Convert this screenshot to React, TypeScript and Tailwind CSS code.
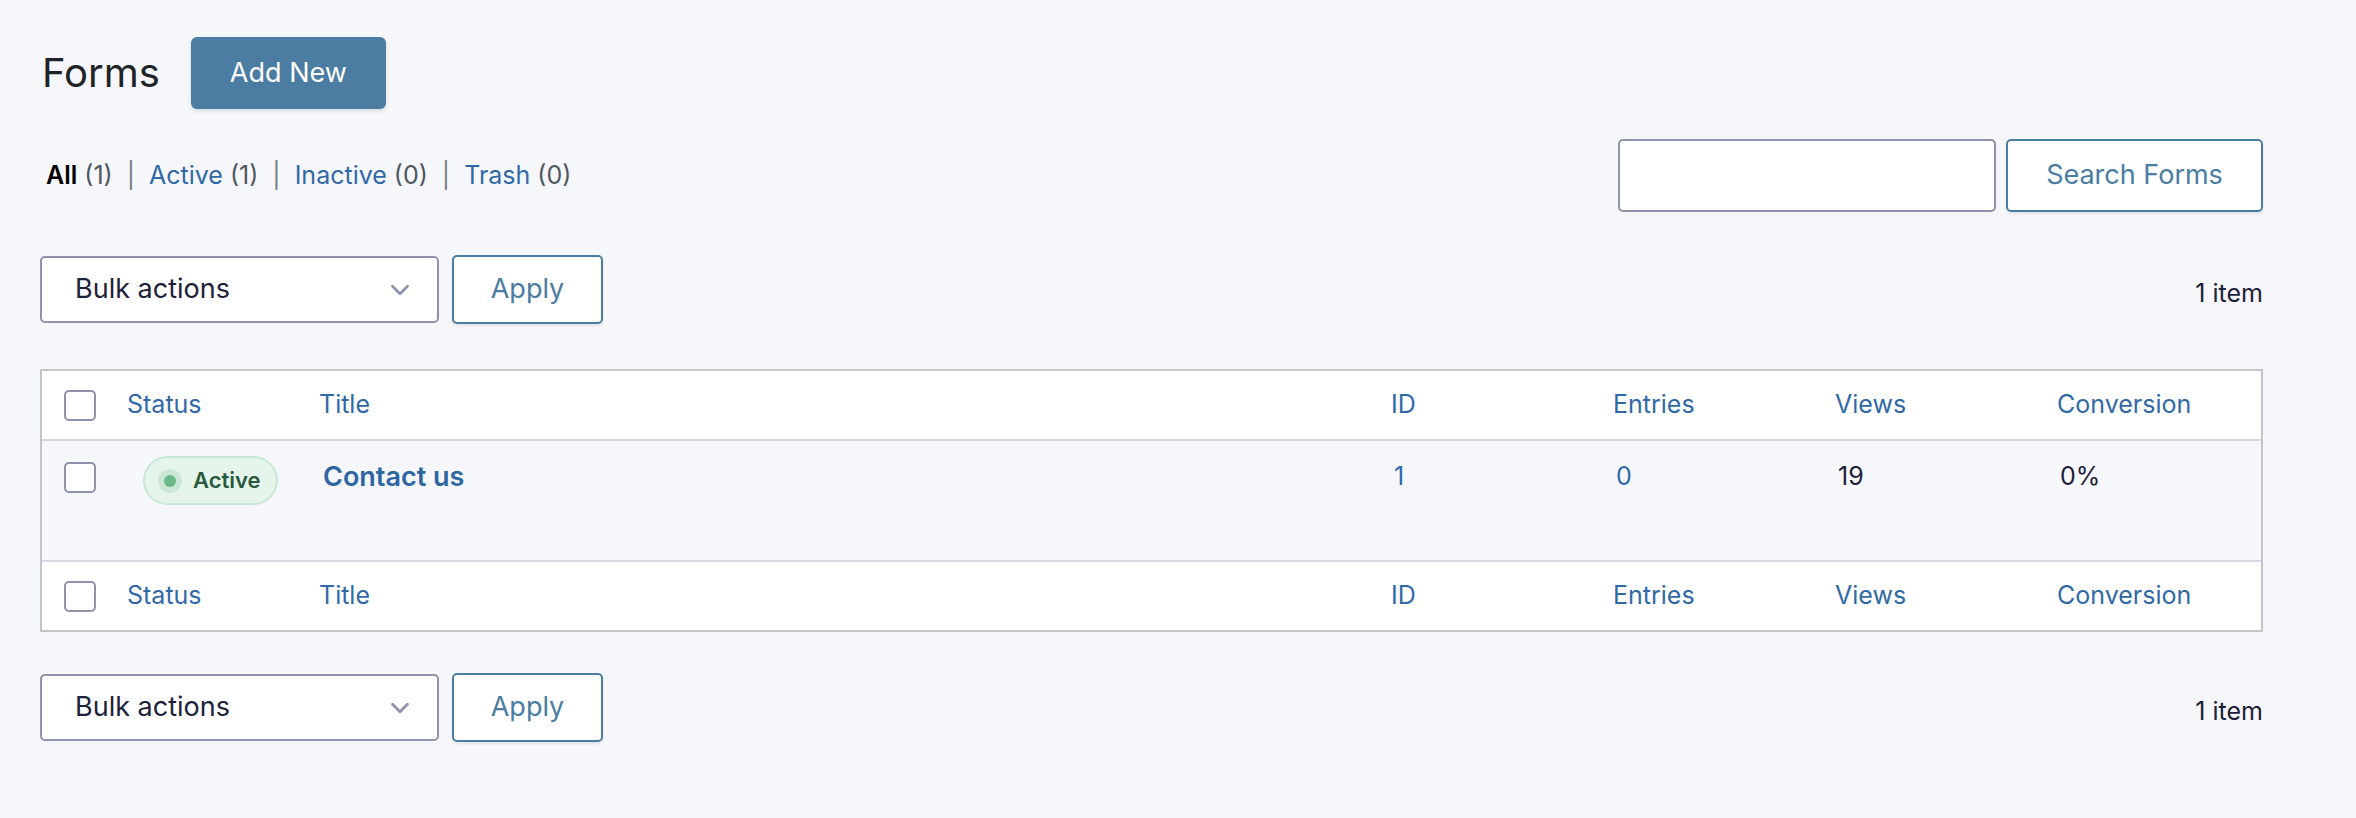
import { ChevronDown } from 'lucide-react';

const COLS = 'grid grid-cols-[85px_192px_1072px_222px_222px_222px_1fr]';

function Checkbox() {
  return <span className="block h-[31px] w-[32px] rounded-[5px] border-2 border-[#8f91ad] bg-white" />;
}

function HeaderRow() {
  return (
    <div className={`${COLS} h-[68px] items-center bg-white text-[25px] text-[#3169a6]`}>
      <div className="pl-[22px]">
        <Checkbox />
      </div>
      <span>Status</span>
      <span>Title</span>
      <span>ID</span>
      <span>Entries</span>
      <span>Views</span>
      <span>Conversion</span>
    </div>
  );
}

function BulkBar() {
  return (
    <div className="flex items-center justify-between">
      <div className="flex items-center gap-[13px]">
        <div className="flex h-[67px] w-[399px] items-center justify-between rounded-[5px] border-2 border-[#8f91ad] bg-white pl-[33px] pr-[22px] text-[27px] text-[#1d2139]">
          <span>Bulk actions</span>
          <ChevronDown className="h-[30px] w-[30px] text-[#8f91ad]" strokeWidth={2.2} />
        </div>
        <button
          type="button"
          className="h-[69px] w-[151px] rounded-[5px] border-2 border-[#4b7ca2] bg-white text-[27px] text-[#4b7ca2] shadow-[0_2px_3px_rgba(0,0,0,0.08)]"
        >
          Apply
        </button>
      </div>
      <span className="pt-[8px] text-[25px] text-[#1d2139]">1 item</span>
    </div>
  );
}

export default function App() {
  return (
    <div className="min-h-screen bg-[#f6f7fb] pl-[40px] pr-[93px] pt-[37px] font-['Inter',sans-serif]">
      <div className="flex h-[72px] items-center gap-[31px]">
        <h1 className="pl-[2px] text-[40px] font-normal text-[#1d2327]">Forms</h1>
        <button
          type="button"
          className="h-[72px] w-[195px] rounded-[6px] bg-[#4b7ca2] text-[27px] text-white shadow-[0_2px_4px_rgba(0,0,0,0.12)]"
        >
          Add New
        </button>
      </div>

      <div className="mt-[30px] flex h-[73px] items-center justify-between">
        <div className="flex items-center pl-[6px] text-[25px] text-[#50575e]">
          <span className="font-semibold text-black">All</span>
          <span className="ml-[7px]">(1)</span>
          <span className="px-[14px] text-[#787c82]">|</span>
          <span className="text-[#3169a6]">Active</span>
          <span className="ml-[7px]">(1)</span>
          <span className="px-[14px] text-[#787c82]">|</span>
          <span className="text-[#3169a6]">Inactive</span>
          <span className="ml-[7px]">(0)</span>
          <span className="px-[14px] text-[#787c82]">|</span>
          <span className="text-[#3169a6]">Trash</span>
          <span className="ml-[7px]">(0)</span>
        </div>
        <div className="flex items-center gap-[10px]">
          <input
            type="search"
            aria-label="Search forms"
            className="h-[73px] w-[378px] rounded-[5px] border-2 border-[#8f91ad] bg-white px-3 text-[25px] outline-none"
          />
          <button
            type="button"
            className="h-[73px] w-[257px] rounded-[5px] border-2 border-[#4b7ca2] bg-white text-[27px] text-[#4b7ca2] shadow-[0_2px_3px_rgba(0,0,0,0.08)]"
          >
            Search Forms
          </button>
        </div>
      </div>

      <div className="mt-[43px]">
        <BulkBar />
      </div>

      <div className="mt-[45px] border-2 border-[#c4c5ca]">
        <HeaderRow />
        <div className={`${COLS} h-[123px] items-start border-y-2 border-[#d8d8e6] bg-[#f6f7fb] text-[25px]`}>
          <div className="pl-[22px] pt-[21px]">
            <Checkbox />
          </div>
          <div className="pl-[16px] pt-[15px]">
            <span className="flex h-[49px] w-[135px] items-center gap-[11px] rounded-full border-2 border-[#c8e8d4] bg-[#e6f5eb] pl-[13px] text-[22px] font-semibold text-[#2a5a3e]">
              <span className="flex h-[24px] w-[24px] items-center justify-center rounded-full bg-[#cbe8d6]">
                <span className="h-[12px] w-[12px] rounded-full bg-[#6cba8b]" />
              </span>
              Active
            </span>
          </div>
          <div className="pl-[4px] pt-[16px] text-[27px] font-semibold text-[#2d66a3]">Contact us</div>
          <div className="pl-[3px] pt-[17px] text-[#3169a6]">1</div>
          <div className="pl-[3px] pt-[17px] text-[#3169a6]">0</div>
          <div className="pl-[3px] pt-[17px] text-[#1d2139]">19</div>
          <div className="pl-[3px] pt-[17px] text-[#1d2139]">0%</div>
        </div>
        <HeaderRow />
      </div>

      <div className="mt-[41px] pb-[40px]">
        <BulkBar />
      </div>
    </div>
  );
}
